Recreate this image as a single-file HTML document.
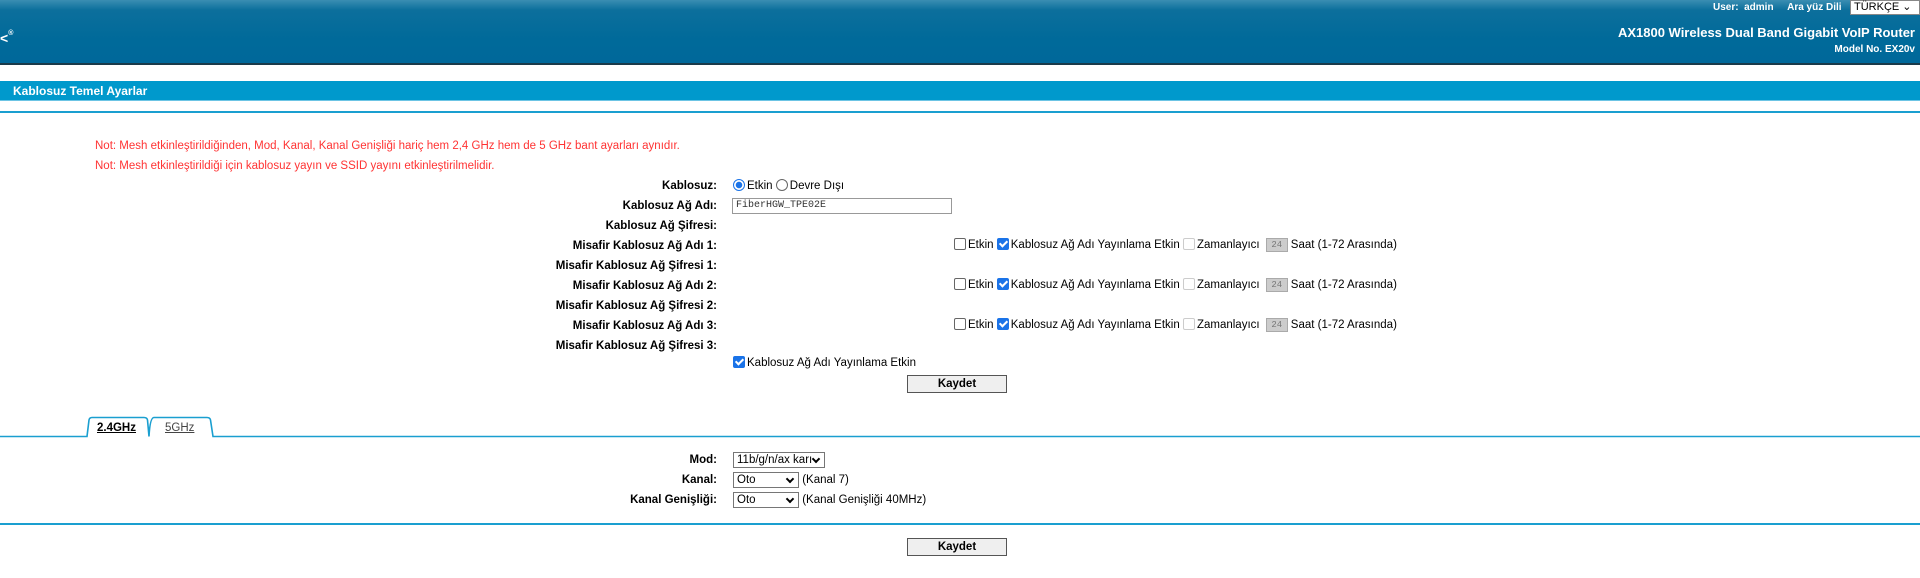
<!DOCTYPE html>
<html><head><meta charset="utf-8"><style>
body{margin:0;width:1920px;height:578px;position:relative;background:#fff;font-family:"Liberation Sans",Arial,sans-serif;font-size:11.5px;color:#000;overflow:hidden}
.a{position:absolute;white-space:nowrap}
.hdr{left:0;top:0;width:1920px;height:63px;background:linear-gradient(#3a8db2 0,#0c6f9c 10px,#006a9a 40px,#00689a 100%);border-bottom:2px solid #1a3a4a}
.lbl{position:absolute;right:1203px;font-weight:bold;white-space:nowrap;line-height:14px}
.v{position:absolute;left:733px;white-space:nowrap;line-height:14px}
.cb{display:inline-block;width:10px;height:10px;border:1px solid #666;border-radius:2px;vertical-align:-2px;margin-right:2px;background:#fff}
.ck{background:#1a73e8;border-color:#1a73e8;position:relative}
.ck:after{content:"";position:absolute;left:3px;top:0px;width:3px;height:6px;border:solid #fff;border-width:0 2px 2px 0;transform:rotate(45deg)}
.dis{border-color:#ccc}
.hr{position:absolute;left:0;width:1920px;height:2px;background:#1a9fd0}
.btn{position:absolute;left:907px;width:98px;height:16px;border:1px solid #555;background:#efefef;font-weight:bold;text-align:center;line-height:16px;font-size:11.5px}
.sel{display:inline-block;border:1px solid #767676;height:14px;line-height:14px;padding:0 3px;vertical-align:middle;position:relative;box-sizing:content-box}
.sel:after{content:"";position:absolute;right:5px;top:3px;width:4px;height:4px;border:solid #000;border-width:0 2px 2px 0;transform:rotate(45deg)}
.n24{display:inline-block;width:20px;height:12px;background:#ccc;border:1px solid #aaa;font-family:"Liberation Mono",monospace;font-size:9px;color:#777;text-align:center;line-height:12px;vertical-align:middle;margin:0 3px}
.rd{display:inline-block;width:10px;height:10px;border-radius:50%;vertical-align:-2px;margin-right:2px}
</style></head><body>
<div class="a hdr"></div>
<div class="a" style="left:0;top:30px;color:#fff;font-weight:bold;font-size:14px">&lt;<span style="font-size:7px;vertical-align:top">®</span></div>
<div class="a" style="left:1713px;top:2px;color:#fff;font-weight:bold;font-size:10px">User:&nbsp; admin &nbsp; &nbsp; Ara yüz Dili</div>
<div class="a" style="left:1850px;top:0px;width:65px;height:13px;background:#fff;border:1px solid #888;font-size:11px;line-height:13px;padding-left:3px">TÜRKÇE ⌄</div>
<div class="a" style="right:5px;top:25px;color:#fff;font-weight:bold;font-size:13px">AX1800 Wireless Dual Band Gigabit VoIP Router</div>
<div class="a" style="right:5px;top:44px;color:#fff;font-weight:bold;font-size:10px">Model No. EX20v</div>
<div class="a" style="left:0;top:81px;width:1920px;height:19px;background:#0099cc;border-bottom:1px solid #6cc4e4"></div>
<div class="a" style="left:13px;top:84px;color:#fff;font-weight:bold;font-size:12px">Kablosuz Temel Ayarlar</div>
<div class="hr" style="top:111px"></div>
<div class="a" style="left:95px;top:140px;color:#f33">Not: Mesh etkinleştirildiğinden, Mod, Kanal, Kanal Genişliği hariç hem 2,4 GHz hem de 5 GHz bant ayarları aynıdır.</div>
<div class="a" style="left:95px;top:160px;color:#f33">Not: Mesh etkinleştirildiği için kablosuz yayın ve SSID yayını etkinleştirilmelidir.</div>

<div class="lbl" style="top:179px">Kablosuz:</div>
<div class="v" style="top:179px"><span class="rd" style="border:1px solid #1a73e8;background:radial-gradient(#1a73e8 3px,#fff 3.5px)"></span>Etkin <span class="rd" style="border:1px solid #666"></span>Devre Dışı</div>
<div class="lbl" style="top:199px">Kablosuz Ağ Adı:</div>
<div class="a" style="left:732px;top:198px;width:215px;height:14px;border:1px solid #999;font-family:'Liberation Mono',monospace;font-size:10px;line-height:14px;padding-left:3px;color:#333">FiberHGW_TPE02E</div>
<div class="lbl" style="top:219px">Kablosuz Ağ Şifresi:</div>
<div class="lbl" style="top:239px">Misafir Kablosuz Ağ Adı 1:</div>
<div class="lbl" style="top:259px">Misafir Kablosuz Ağ Şifresi 1:</div>
<div class="lbl" style="top:279px">Misafir Kablosuz Ağ Adı 2:</div>
<div class="lbl" style="top:299px">Misafir Kablosuz Ağ Şifresi 2:</div>
<div class="lbl" style="top:319px">Misafir Kablosuz Ağ Adı 3:</div>
<div class="lbl" style="top:339px">Misafir Kablosuz Ağ Şifresi 3:</div>
<div class="a" style="left:954px;top:238px"><span class="cb"></span>Etkin <span class="cb ck"></span>Kablosuz Ağ Adı Yayınlama Etkin <span class="cb dis"></span>Zamanlayıcı <span class="n24">24</span>Saat (1-72 Arasında)</div>
<div class="a" style="left:954px;top:278px"><span class="cb"></span>Etkin <span class="cb ck"></span>Kablosuz Ağ Adı Yayınlama Etkin <span class="cb dis"></span>Zamanlayıcı <span class="n24">24</span>Saat (1-72 Arasında)</div>
<div class="a" style="left:954px;top:318px"><span class="cb"></span>Etkin <span class="cb ck"></span>Kablosuz Ağ Adı Yayınlama Etkin <span class="cb dis"></span>Zamanlayıcı <span class="n24">24</span>Saat (1-72 Arasında)</div>
<div class="v" style="top:356px"><span class="cb ck"></span>Kablosuz Ağ Adı Yayınlama Etkin</div>
<div class="btn" style="top:375px">Kaydet</div>

<svg class="a" style="left:0;top:416px" width="1920" height="22"><path d="M0 20.5H87L89 4Q89.5 1.5 92 1.5H144Q147 1.5 147.5 4L149 20.5M149 20.5Q150 1.5 154 1.5H207Q210 1.5 210.5 4L213 20.5H1920" fill="none" stroke="#1a9fd0" stroke-width="1.6"/></svg>
<div class="a" style="left:97px;top:422px;font-weight:bold;text-decoration:underline">2.4GHz</div>
<div class="a" style="left:165px;top:422px;color:#444;text-decoration:underline">5GHz</div>

<div class="lbl" style="top:453px">Mod:</div>
<div class="v" style="top:452px"><span class="sel" style="width:84px">11b/g/n/ax karı</span></div>
<div class="lbl" style="top:473px">Kanal:</div>
<div class="v" style="top:472px"><span class="sel" style="width:58px">Oto</span> (Kanal 7)</div>
<div class="lbl" style="top:493px">Kanal Genişliği:</div>
<div class="v" style="top:492px"><span class="sel" style="width:58px">Oto</span> (Kanal Genişliği 40MHz)</div>
<div class="hr" style="top:523px"></div>
<div class="btn" style="top:538px">Kaydet</div>
</body></html>
